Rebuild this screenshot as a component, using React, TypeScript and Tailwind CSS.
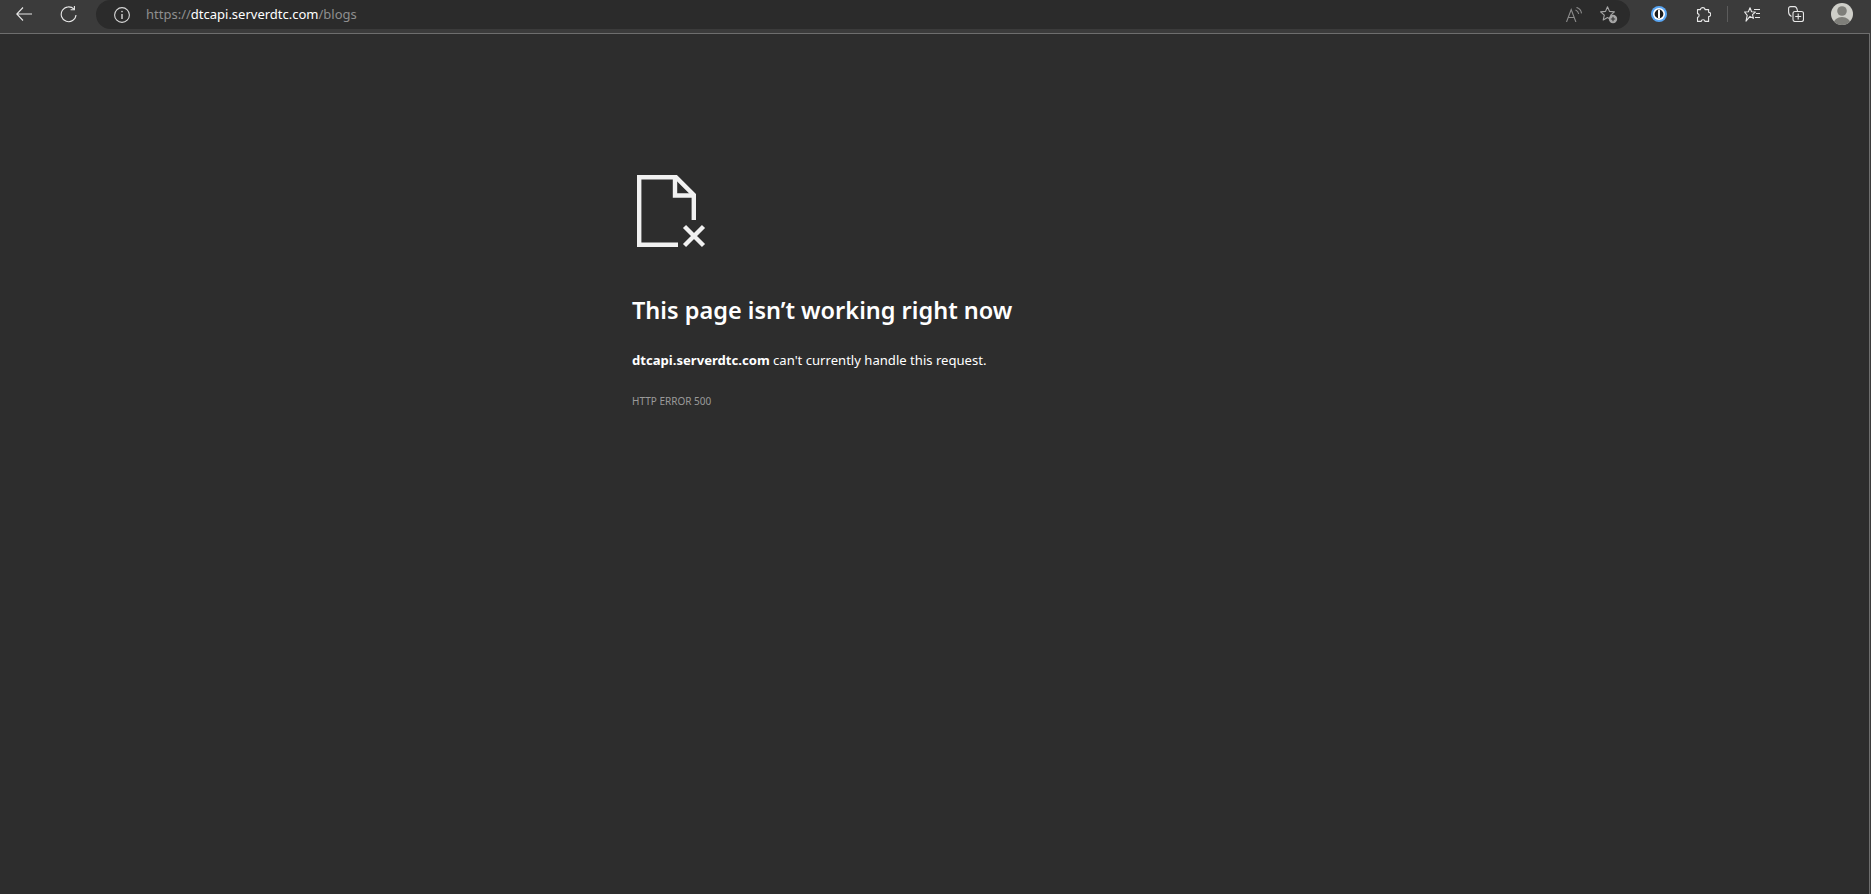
function FileErrorIcon() {
  return (
    <svg width="72" height="76" viewBox="0 0 72 76" fill="none" stroke="#f1f1f1" strokeWidth="4.4">
      <path d="M43 71.8H4.2V4.2H41L58.8 22V47" />
      <path d="M40 4.2V22.5H58.8" />
      <path d="M49.5 53.5L68.5 72.5M68.5 53.5L49.5 72.5" />
    </svg>
  );
}

function BackIcon() {
  return (
    <svg width="16" height="14" viewBox="0 0 16 14" fill="none" stroke="#e8e8e8" strokeWidth="1.1">
      <path d="M16 7H0.8M7 0.5L0.8 7L7 13.5" />
    </svg>
  );
}

function ReloadIcon() {
  return (
    <svg width="17" height="17" viewBox="0 0 17 17" fill="none" stroke="#e8e8e8" strokeWidth="1.1">
      <path d="M14 3.2A7.4 7.4 0 1 0 16 9" />
      <path d="M14.4 0V3.8H10.6" />
    </svg>
  );
}

function InfoIcon() {
  return (
    <svg width="16" height="16" viewBox="0 0 16 16" fill="none" stroke="#d8d8d8" strokeWidth="1.1">
      <circle cx="8" cy="8" r="7.4" />
      <path d="M8 7V12" strokeWidth="1.4" />
      <circle cx="8" cy="4.6" r="0.8" fill="#d8d8d8" stroke="none" />
    </svg>
  );
}

function ReadAloudIcon() {
  return (
    <svg width="16" height="15" viewBox="0 0 16 15" fill="none" stroke="#8c8c8c" strokeWidth="1.1">
      <path d="M0.5 15L5.2 2.5L9.9 15M2.1 10.5H8.3" />
      <path d="M9.5 3C11.2 3.6 12.4 5 12.7 7M10.5 0.4C13.2 1.2 15.2 3.4 15.5 6.4" />
    </svg>
  );
}

function FavAddIcon() {
  return (
    <svg width="18" height="18" viewBox="0 0 18 18" fill="none">
      <path
        d="M7.5 0.8L9.5 5.4L14.4 5.9L10.7 9.2L11.8 14L7.5 11.6L3.2 14L4.3 9.2L0.6 5.9L5.5 5.4Z"
        stroke="#a6a6a6"
        strokeWidth="1.1"
        strokeLinejoin="round"
      />
      <circle cx="13" cy="13" r="4.2" fill="#a6a6a6" />
      <path d="M13 10.8V15.2M10.8 13H15.2" stroke="#333333" strokeWidth="1.1" />
    </svg>
  );
}

function PasswordIcon() {
  return (
    <svg width="16" height="16" viewBox="0 0 16 16">
      <circle cx="8" cy="8" r="8" fill="#5aa7f5" />
      <circle cx="8" cy="8" r="6" fill="#ffffff" />
      <circle cx="8" cy="8" r="4.4" fill="#1c1c1c" />
      <rect x="7" y="3.8" width="2" height="8.4" rx="0.5" fill="#ffffff" />
    </svg>
  );
}

function PuzzleIcon() {
  return (
    <svg width="15" height="15" viewBox="0 0 15 15" fill="none" stroke="#e8e8e8" strokeWidth="1.1" strokeLinejoin="round">
      <path d="M4.5 2.6C4.5 0 9 0 9 2.6H12.6V5.2C15.4 5.2 15.4 9.6 12.6 9.6V14.4H9C9 12.2 5.2 12.2 5.2 14.4H1.5V10.2C3.6 10.2 3.6 6.6 1.5 6.6V2.6Z" />
    </svg>
  );
}

function FavoritesIcon() {
  return (
    <svg width="16" height="15" viewBox="0 0 16 15" fill="none" stroke="#e8e8e8" strokeWidth="1.1">
      <path
        d="M6 0.8L7.6 4.7L11.4 5L8.5 7.6L9.4 11.4L6 9.4L2 14.2L3.2 8.4L0.6 5L4.4 4.7Z"
        strokeLinejoin="round"
      />
      <path d="M10 2.5H16M12 6.5H16M11 10.5H16" />
    </svg>
  );
}

function CollectionsIcon() {
  return (
    <svg width="16" height="16" viewBox="0 0 16 16" fill="none" stroke="#e8e8e8" strokeWidth="1.1">
      <path d="M3.5 10.5C1.5 9.5 0.6 8 0.6 6V2.6C0.6 1.4 1.4 0.6 2.6 0.6H6.5C8 0.6 9 1.6 9.5 5" />
      <rect x="5" y="5.5" width="10.5" height="10" rx="2" />
      <path d="M10.2 7.5V13.5M7.2 10.5H13.2" />
    </svg>
  );
}

function Avatar() {
  return (
    <svg width="22" height="22" viewBox="0 0 22 22">
      <clipPath id="avatar-clip">
        <circle cx="11" cy="11" r="11" />
      </clipPath>
      <g clipPath="url(#avatar-clip)">
        <rect width="22" height="22" fill="#cfcfc9" />
        <circle cx="11" cy="8" r="4.8" fill="#7f7f7a" />
        <ellipse cx="11" cy="20.5" rx="8.5" ry="6.5" fill="#7f7f7a" />
      </g>
    </svg>
  );
}

export default function App() {
  return (
    <div className="h-[894px] w-full overflow-hidden bg-[#3b3b3b] font-['Noto_Sans',sans-serif]">
      {/* Toolbar */}
      <div className="flex h-[33px] items-start">
        <div className="flex h-[28px] w-[96px] shrink-0 items-center pl-[16px]">
          <BackIcon />
          <div className="ml-[28px]">
            <ReloadIcon />
          </div>
        </div>
        <div className="flex h-[29px] w-[1534px] shrink-0 items-center rounded-full bg-[#2b2b2b]">
          <div className="ml-[18px]">
            <InfoIcon />
          </div>
          <div className="ml-[16px] text-[13px] text-[#8f8f8f]">
            https://<span className="text-white">dtcapi.serverdtc.com</span>/blogs
          </div>
          <div className="mr-[12px] ml-auto flex items-center gap-[18px]">
            <ReadAloudIcon />
            <FavAddIcon />
          </div>
        </div>
        <div className="ml-[21px] flex h-[28px] items-center">
          <PasswordIcon />
          <div className="ml-[29px]">
            <PuzzleIcon />
          </div>
          <div className="ml-[16px] h-[16px] w-px bg-[#5c5c5c]" />
          <div className="ml-[16px]">
            <FavoritesIcon />
          </div>
          <div className="ml-[28px]">
            <CollectionsIcon />
          </div>
          <div className="ml-[27px]">
            <Avatar />
          </div>
        </div>
      </div>

      {/* Page */}
      <div className="mr-[1px] h-[861px] border-t border-r border-[#6e6e6e] bg-[#2d2d2d] pl-[632px] pt-[139px]">
        <div className="ml-[3px]">
          <FileErrorIcon />
        </div>
        <h1 className="mt-[46px] text-[23.5px] leading-[30px] font-semibold text-white">
          This page isn’t working right now
        </h1>
        <p className="mt-[25px] text-[13.1px] leading-[20px] text-white">
          <strong className="font-bold">dtcapi.serverdtc.com</strong> can't currently handle this request.
        </p>
        <div className="mt-[24px] text-[10px] leading-[14px] text-[#9a9a9a]">HTTP ERROR 500</div>
      </div>
    </div>
  );
}
